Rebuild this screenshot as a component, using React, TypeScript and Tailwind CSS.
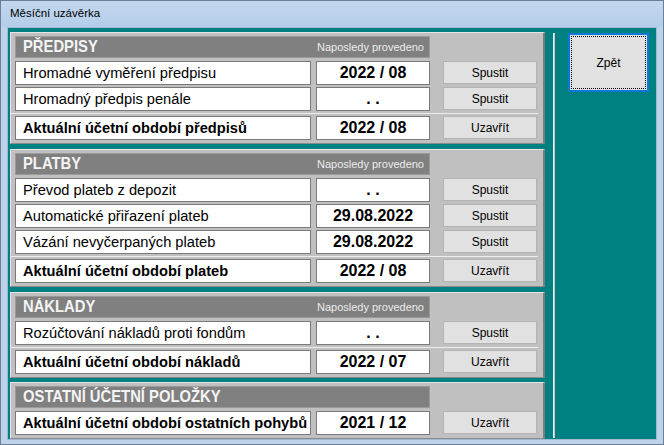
import React from 'react';

type RowProps = {
  label: string;
  value: string;
  btn: string;
  bold?: boolean;
};

function Row({ label, value, btn, bold }: RowProps) {
  return (
    <div className="flex h-[24px] items-start">
      <div
        className={`flex h-[24px] w-[296px] items-center border border-[#7a7a7a] bg-white pl-[7px] text-[14.67px] text-black ${
          bold ? 'font-bold' : ''
        }`}
      >
        {label}
      </div>
      <div className="ml-[5px] flex h-[24px] w-[114px] items-center justify-center border border-[#7a7a7a] bg-white text-[16px] font-bold text-black">
        {value}
      </div>
      <button className="ml-[13px] flex h-[23px] w-[94px] items-center justify-center border border-[#b4b4b4] bg-[#e1e1e1] text-[12px] text-black">
        {btn}
      </button>
    </div>
  );
}

function Header({ title, note = true }: { title: string; note?: boolean }) {
  return (
    <div className="flex h-[22px] w-[415px] items-center justify-between border border-[#9a9a9a] bg-[#808080] pl-[7px] pr-[5px]">
      <span className="inline-block origin-center scale-y-[1.1] text-[14.8px] font-bold text-[#f4f4f4]">{title}</span>
      {note && <span className="text-[11px] text-[#ececec]">Naposledy provedeno</span>}
    </div>
  );
}

function Sep() {
  return (
    <div className="flex h-[5px] items-center">
      <div className="ml-[-4px] h-[1px] w-[527px] bg-[#ededed]" />
    </div>
  );
}

function Panel({ children, className = '' }: { children: React.ReactNode; className?: string }) {
  return (
    <div
      className={`w-[535px] border-t border-l border-r-2 border-b border-t-[#e6e6e6] border-l-[#e6e6e6] border-r-[#7c7c7c] border-b-[#8a8a8a] bg-[#c0c0c0] pl-[4px] pt-[3px] pb-[3px] ${className}`}
    >
      {children}
    </div>
  );
}

export default function App() {
  return (
    <div className="flex h-[445px] w-[664px] flex-col border border-[#6b7f96] bg-[#bcd3ea] font-[family-name:'Liberation_Sans',Arial,sans-serif]">
      <div className="flex h-[26px] items-center bg-gradient-to-b from-[#c3d8ee] to-[#b4cde8] pl-[9px] text-[11.5px] text-black">
        Měsíční uzávěrka
      </div>
      <div className="mx-[6px] flex h-[413px] border border-[#9fb8d4] bg-[#008080]">
        <div className="flex flex-col pl-[2px] pt-[4px]">
          <Panel>
            <Header title="PŘEDPISY" />
            <div className="mt-[3px] flex flex-col gap-[2px]">
              <Row label="Hromadné vyměření předpisu" value="2022 / 08" btn="Spustit" />
              <Row label="Hromadný předpis penále" value=". ." btn="Spustit" />
            </div>
            <Sep />
            <Row label="Aktuální účetní období předpisů" value="2022 / 08" btn="Uzavřít" bold />
          </Panel>
          <Panel className="mt-[5px]">
            <Header title="PLATBY" />
            <div className="mt-[3px] flex flex-col gap-[2px]">
              <Row label="Převod plateb z depozit" value=". ." btn="Spustit" />
              <Row label="Automatické přiřazení plateb" value="29.08.2022" btn="Spustit" />
              <Row label="Vázání nevyčerpaných plateb" value="29.08.2022" btn="Spustit" />
            </div>
            <Sep />
            <Row label="Aktuální účetní období plateb" value="2022 / 08" btn="Uzavřít" bold />
          </Panel>
          <Panel className="mt-[5px]">
            <Header title="NÁKLADY" />
            <div className="mt-[3px] flex flex-col gap-[2px]">
              <Row label="Rozúčtování nákladů proti fondům" value=". ." btn="Spustit" />
            </div>
            <Sep />
            <Row label="Aktuální účetní období nákladů" value="2022 / 07" btn="Uzavřít" bold />
          </Panel>
          <Panel className="mt-[4px]">
            <Header title="OSTATNÍ ÚČETNÍ POLOŽKY" note={false} />
            <div className="mt-[3px]">
              <Row label="Aktuální účetní období ostatních pohybů" value="2021 / 12" btn="Uzavřít" bold />
            </div>
          </Panel>
        </div>
        <div className="ml-[8px] mt-[5px] mb-[1px] flex w-[2px]">
          <div className="w-[1px] bg-[#f2f2f2]" />
          <div className="w-[1px] bg-[#c8c8c8]" />
        </div>
        <div className="ml-[13px] mt-[5px]">
          <button className="flex h-[59px] w-[81px] items-center justify-center border-2 border-[#0a78d7] bg-[#e1e1e1] text-[12px] text-black outline-1 outline-offset-[-4px] outline-dotted outline-black">
            Zpět
          </button>
        </div>
      </div>
    </div>
  );
}
